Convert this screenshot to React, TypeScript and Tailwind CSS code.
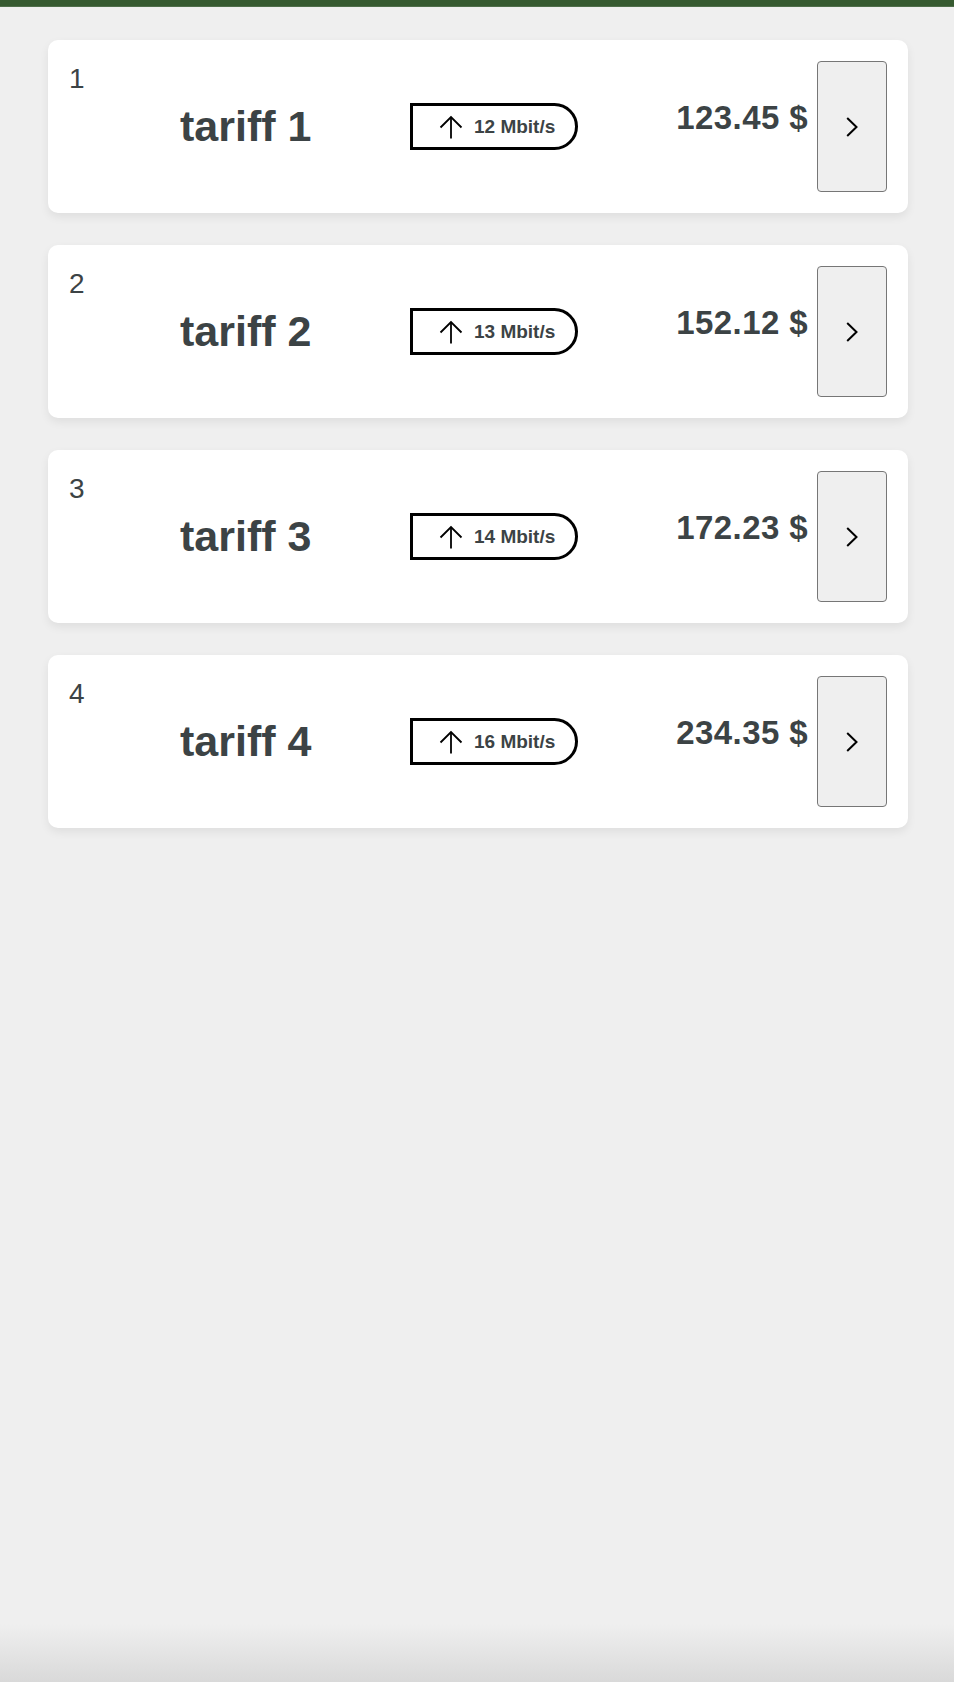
import React from "react";

const tariffs = [
  { n: 1, name: "tariff 1", speed: "12 Mbit/s", price: "123.45 $" },
  { n: 2, name: "tariff 2", speed: "13 Mbit/s", price: "152.12 $" },
  { n: 3, name: "tariff 3", speed: "14 Mbit/s", price: "172.23 $" },
  { n: 4, name: "tariff 4", speed: "16 Mbit/s", price: "234.35 $" },
];

function ArrowUpIcon() {
  return (
    <svg width="24" height="24" viewBox="0 0 24 24" fill="none" stroke="#000" strokeWidth="1.8" strokeLinecap="butt" strokeLinejoin="miter">
      <path d="M1.5 12.5 L12 2 L22.5 12.5" />
      <path d="M12 2 V23.5" />
    </svg>
  );
}

function ChevronIcon() {
  return (
    <svg width="12" height="20" viewBox="0 0 12 20" fill="none" stroke="#000" strokeWidth="2">
      <path d="M1.2 1 L10.5 10 L1.2 19" />
    </svg>
  );
}

function Card({ t }: { t: (typeof tariffs)[number] }) {
  return (
    <div className="flex items-center bg-white rounded-[10px] p-[21px] shadow-[0_4px_10px_rgba(0,0,0,0.07)]">
      <div className="w-[111px] self-start shrink-0 text-[28px] leading-[28px] mt-[4px] text-[#3c4345]">{t.n}</div>
      <div className="w-[230px] shrink-0 text-[43px] leading-[43px] font-bold text-[#3c4345]">{t.name}</div>
      <div className="w-[168px] h-[47px] shrink-0 border-[3px] border-black rounded-r-[24px] flex items-center pl-[26px] gap-[11px]">
        <ArrowUpIcon />
        <span className="text-[19px] leading-none font-bold text-[#3c4345]">{t.speed}</span>
      </div>
      <div className="flex-1 flex justify-end mb-[19px] pr-[9px]">
        <span className="text-[33px] leading-none font-bold text-[#3c4345] tracking-[0.4px]">{t.price}</span>
      </div>
      <button className="w-[70px] h-[131px] shrink-0 bg-[#efefef] border border-[#767676] rounded-[4px] flex items-center justify-center">
        <ChevronIcon />
      </button>
    </div>
  );
}

export default function App() {
  return (
    <div
      className="min-h-[1682px] bg-[#efefef] bg-[linear-gradient(to_bottom,#efefef_calc(100%-58px),#d9d9d9)]"
      style={{ fontFamily: '"Liberation Sans", Arial, Helvetica, sans-serif' }}
    >
      <div className="h-[7px] bg-[#365a30] border-b border-[#4f6e4a]" />
      <div className="pl-[48px] pr-[46px] pt-[33px] flex flex-col gap-[32px]">
        {tariffs.map((t) => (
          <Card key={t.n} t={t} />
        ))}
      </div>
    </div>
  );
}
